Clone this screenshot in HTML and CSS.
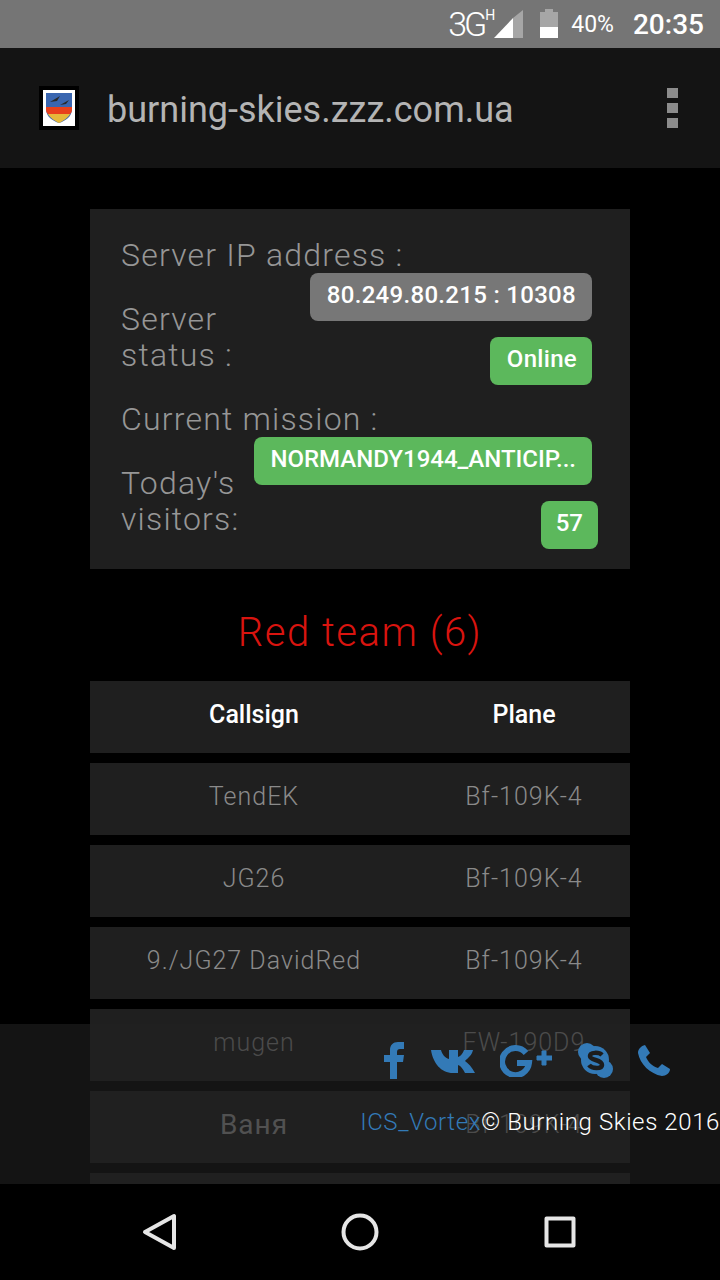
FILE: index.html
```html
<!DOCTYPE html>
<html lang="en">
<head>
    <meta charset="UTF-8">
    <title>Burning Skies</title>
    <link rel="stylesheet" href="styles.css">
</head>
<body>
    <div class="phone">
        <div class="status-bar">
            <span class="net">3G</span><span class="net-h">H</span>
            <svg class="signal" width="30" height="29" viewBox="0 0 30 29">
                <path d="M30 0V28H20V8Z" fill="#a6a6a6"/>
                <path d="M20 8V28H1Z" fill="#fff"/>
            </svg>
            <svg class="battery" width="20" height="30" viewBox="0 0 20 30">
                <path d="M6 0H14V3H19V18H1V3H6Z" fill="#a6a6a6"/>
                <rect x="1" y="18" width="18" height="11" fill="#fff"/>
            </svg>
            <span class="percent">40%</span>
            <span class="clock">20:35</span>
        </div>

        <div class="toolbar">
            <div class="favicon">
                <svg width="26" height="30" viewBox="0 0 26 30">
                    <path d="M0 0H26V16C26 24 19 28 13 30C7 28 0 24 0 16Z" fill="#3a66b0"/>
                    <path d="M0 14H26V16C26 18 25.500 20 24 21H2C.5 20 0 18 0 16Z" fill="#e8401c"/>
                    <path d="M2 21H24C22 25 17 28 13 30C9 28 4 25 2 21Z" fill="#e6b83a"/>
                    <path d="M4 9L14 3L11 8ZM14 12L23 7L20 11Z" fill="#2a2a2a"/>
                </svg>
            </div>
            <span class="url">burning-skies.zzz.com.ua</span>
            <div class="kebab"><i></i><i></i><i></i></div>
        </div>

        <div class="page">
            <section class="info">
                <div class="info-labels">
                    <div>Server IP address :</div>
                    <div>Server<br>status :</div>
                    <div>Current mission :</div>
                    <div>Today's<br>visitors:</div>
                </div>
                <div class="info-badges">
                    <span class="badge badge-grey">80.249.80.215 : 10308</span>
                    <span class="badge badge-status">Online</span>
                    <span class="badge badge-mission">NORMANDY1944_ANTICIP...</span>
                    <span class="badge badge-count">57</span>
                </div>
            </section>

            <h2 class="team-title">Red team (6)</h2>

            <div class="team">
                <div class="row row-head"><span>Callsign</span><span>Plane</span></div>
                <div class="row"><span>TendEK</span><span>Bf-109K-4</span></div>
                <div class="row"><span>JG26</span><span>Bf-109K-4</span></div>
                <div class="row"><span>9./JG27 DavidRed</span><span>Bf-109K-4</span></div>
                <div class="row"><span>mugen</span><span>FW-190D9</span></div>
                <div class="row"><span class="cyr">Ваня</span><span>Bf-109K-4</span></div>
                <div class="row"><span></span><span></span></div>
            </div>

            <footer class="site-footer">
                <div class="socials">
                    <svg width="20" height="37" viewBox="0 0 20 37"><path d="M6 37V20H0V13H6V8C6 3 9 0 14 0H20V7H16C14 7 13 8 13 10V13H20L19 20H13V37Z"/></svg>
                    <svg class="vk" width="44" height="24" viewBox="0 0 44 24"><path d="M0 1H10C11 5 14 9 18 10V1H27V8C30 7 32 4 33 1H42C41 6 37 9 34 12C37 14 41 18 44 24H34C32 20 30 17 27 16V24H22C10 24 2 14 0 1Z"/></svg>
                    <svg class="gplus" width="52" height="33" viewBox="0 0 52 33">
                        <path d="M26 9A13.500 13.500 0 1 0 29 19H17" fill="none" stroke-width="6"/>
                        <path d="M42 12H46V17H52V21H46V26H42V21H37V17H42Z" transform="translate(0 -5)"/>
                    </svg>
                    <svg class="skype" width="35" height="35" viewBox="0 0 35 35">
                        <circle cx="17" cy="17" r="14"/>
                        <circle cx="9" cy="9" r="9"/>
                        <circle cx="26" cy="26" r="9"/>
                        <path d="M24 12C21 9 12 9 12 13C12 18 24 16 24 22C24 26 14 26 11 22" fill="none" stroke="#1c1c1c" stroke-width="4.500"/>
                    </svg>
                    <svg width="32" height="31" viewBox="0 0 32 31"><path d="M7 0L12 8L8 12C10 17 14 21 20 23L24 19L32 24C32 28 28 31 24 31C12 29 2 19 0 8C0 4 3 1 7 0Z"/></svg>
                </div>
                <div class="credits"><a href="#">ICS_Vortex</a><span>© Burning Skies 2016</span></div>
            </footer>
        </div>

        <div class="nav-bar">
            <svg width="36" height="40" viewBox="0 0 36 40"><path d="M32 4V36L3 20Z"/></svg>
            <svg width="40" height="40" viewBox="0 0 40 40"><circle cx="20" cy="20" r="16.500"/></svg>
            <svg width="36" height="36" viewBox="0 0 36 36"><rect x="4.500" y="4.500" width="27" height="27"/></svg>
        </div>
    </div>
</body>
</html>
```

FILE: styles.css
```css
html, body {
    margin: 0;
    background: #000;
}
.phone {
    width: 720px;
    height: 1280px;
    display: flex;
    flex-direction: column;
    overflow: hidden;
    font-family: Roboto, Arial, sans-serif;
}

/* android status bar */
.status-bar {
    height: 48px;
    flex: none;
    background: #757575;
    color: #fff;
    display: flex;
    align-items: center;
    justify-content: flex-end;
    padding-right: 16px;
    box-sizing: border-box;
}
.net {
    font-size: 34px;
    font-weight: 300;
    letter-spacing: -3px;
}
.net-h {
    font-size: 14px;
    margin-bottom: 18px;
    margin-left: 1px;
    margin-right: 1px;
}
.signal {
    margin-left: -3px;
}
.battery {
    margin-left: 16px;
}
.percent {
    font-size: 23px;
    margin-left: 12px;
}
.clock {
    font-size: 28px;
    font-weight: 500;
    margin-left: 19px;
}

/* browser toolbar */
.toolbar {
    height: 120px;
    flex: none;
    background: #141414;
    display: flex;
    align-items: center;
    padding: 0 42px 0 39px;
}
.favicon {
    width: 32px;
    height: 36px;
    border: 4px solid #000;
    background: #fff;
    display: flex;
    align-items: center;
    justify-content: center;
    margin-right: 28px;
}
.url {
    font-size: 36px;
    color: #b4b4b4;
    flex: 1;
    margin-top: 4px;
}
.kebab {
    display: flex;
    flex-direction: column;
    gap: 5px;
}
.kebab i {
    display: block;
    width: 11px;
    height: 10px;
    background: #8c8c8c;
}

.page {
    flex: 1;
    position: relative;
    overflow: hidden;
    padding: 41px 90px 0;
}

/* server info */
.info {
    background: #1f1f1f;
    display: flex;
    justify-content: space-between;
    padding: 28px 38px 32px 31px;
    height: 300px;
}
.info-labels {
    width: 120px;
    flex: none;
    display: flex;
    flex-direction: column;
    gap: 28px;
    font-size: 32px;
    font-weight: 300;
    line-height: 36px;
    letter-spacing: 1.200px;
    white-space: nowrap;
    color: #969696;
}
.info-badges {
    display: flex;
    flex-direction: column;
    align-items: flex-end;
    gap: 16px;
    padding-top: 36px;
}
.badge {
    flex: none;
    background: #5cb85c;
    color: #fff;
    font-size: 24px;
    font-weight: 500;
    line-height: 44px;
    height: 48px;
    padding: 0 15px;
    border-radius: 8px;
    white-space: nowrap;
}
.badge-grey {
    background: #777;
    letter-spacing: 0.300px;
    padding: 0 16px 0 17px;
}
.badge-status {
    padding: 0 15px 0 17px;
    letter-spacing: 0.300px;
}
.badge-mission {
    margin-top: 36px;
    padding: 0 16px;
}
.badge-count {
    margin-right: -6px;
    padding: 0 15px;
}

.team-title {
    margin: 39px 0 23px;
    font-size: 40px;
    font-weight: 300;
    line-height: 50px;
    letter-spacing: 1.500px;
    text-align: center;
    color: #d9140f;
}

.team {
    display: flex;
    flex-direction: column;
    gap: 10px;
}
.row {
    height: 72px;
    flex: none;
    box-sizing: border-box;
    padding-bottom: 6px;
    background: #1f1f1f;
    display: grid;
    grid-template-columns: 328px 212px;
    align-items: center;
    text-align: center;
    font-size: 25px;
    font-weight: 300;
    letter-spacing: 1px;
    color: #8a8a8a;
}
.row-head {
    color: #fff;
    font-weight: 500;
    letter-spacing: 0;
}
.cyr {
    font-size: 28px;
    font-weight: 400;
    color: #9a9a9a;
}

/* translucent bar fixed over the list */
.site-footer {
    position: absolute;
    left: 0;
    right: 0;
    bottom: 0;
    height: 160px;
    background: rgba(33, 33, 33, 0.6);
}
.socials {
    display: flex;
    align-items: center;
    justify-content: flex-end;
    gap: 26px;
    padding: 18px 50px 0 0;
    height: 37px;
    fill: #337ab7;
    stroke: none;
}
.vk {
    margin: 0 -1px 0 1px;
}
.gplus {
    stroke: #337ab7;
}
.skype {
    margin-right: -1px;
}
.credits {
    display: flex;
    justify-content: flex-end;
    margin-top: 29px;
    font-size: 24px;
    font-weight: 300;
    letter-spacing: 0.600px;
    white-space: nowrap;
    color: #fff;
}
.credits a {
    color: #337ab7;
    text-decoration: none;
}

/* android nav bar */
.nav-bar {
    height: 96px;
    flex: none;
    background: #000;
    display: flex;
    align-items: center;
    justify-content: space-between;
    padding: 0 142px;
    fill: none;
    stroke: #e6e6e6;
    stroke-width: 4;
    stroke-linejoin: round;
}
```
